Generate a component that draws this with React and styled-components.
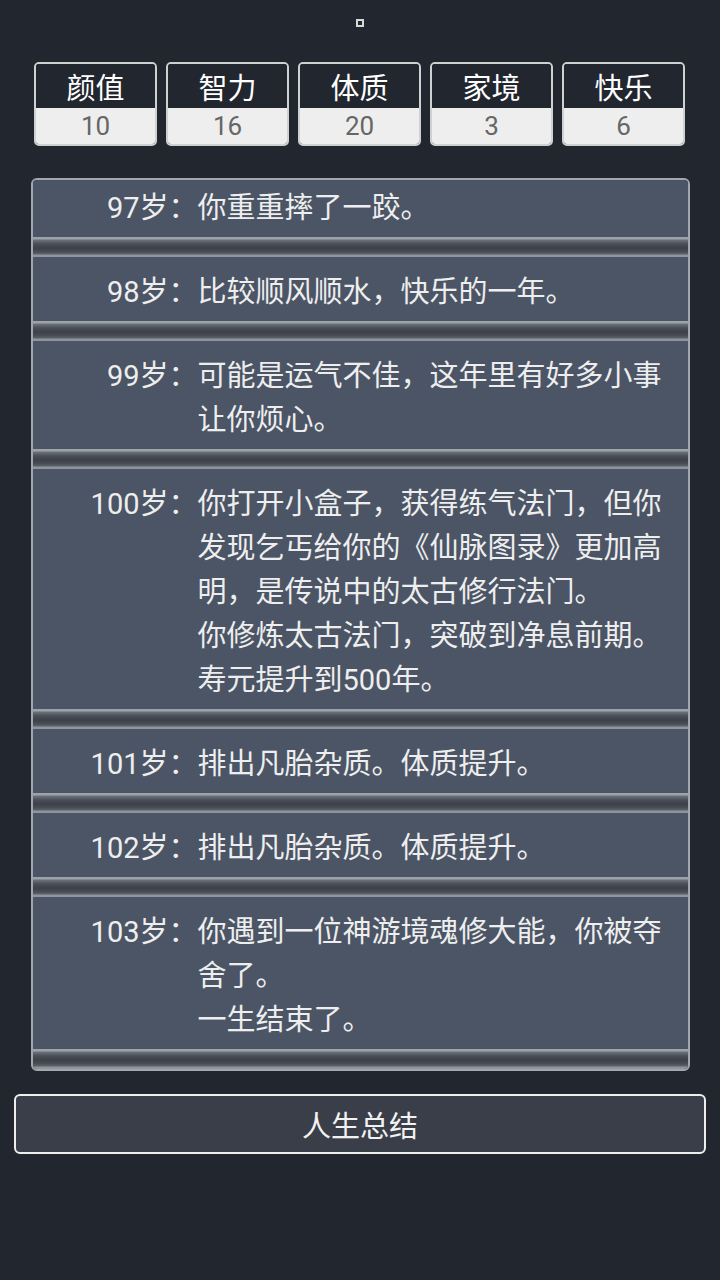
import React, { useEffect, useRef } from 'react';
import styled, { createGlobalStyle } from 'styled-components';

const GlobalStyle = createGlobalStyle`
    html, body {
        margin: 0;
        padding: 0;
        background-color: #21262f;
    }
    body {
        font-family: Roboto, "Noto Sans CJK SC", sans-serif;
        color: #eeeeee;
    }
`;

const Page = styled.div`
    width: 720px;
    height: 1280px;
    display: flex;
    flex-direction: column;
    align-items: center;
    box-sizing: border-box;
    padding-top: 19px;
`;

const Marker = styled.span`
    width: 4px;
    height: 4px;
    border: 2px solid #d8d8d8;
    margin-bottom: 35px;
`;

const StatRow = styled.div`
    display: flex;
    gap: 9px;
    width: 651px;
    margin-bottom: 32px;
    margin-right: 1px;
`;

const StatBox = styled.div`
    width: 123px;
    height: 84px;
    box-sizing: border-box;
    border: 2px solid #cfd0d2;
    border-radius: 5px;
    overflow: hidden;
    display: flex;
    flex-direction: column;
`;

const StatLabel = styled.div`
    height: 44px;
    box-sizing: border-box;
    padding-top: 2px;
    background-color: #21262f;
    color: #ffffff;
    font-size: 29px;
    line-height: 46px;
    text-align: center;
`;

const StatValue = styled.div`
    flex: 1;
    background-color: #eeeeee;
    color: #666666;
    font-size: 26px;
    line-height: 36px;
    text-align: center;
`;

const Panel = styled.div`
    width: 659px;
    height: 893px;
    box-sizing: border-box;
    border: 2px solid #a3a6ac;
    border-radius: 6px;
    background-color: #3b3f48;
    overflow-y: auto;
    scrollbar-width: none;
    &::-webkit-scrollbar { display: none; }
`;

const Entry = styled.div`
    display: flex;
    background-color: #4b5565;
    padding: 13px 0 7px;
    font-size: 29px;
    line-height: 44px;
    color: #eeeeee;
`;

const Age = styled.div`
    width: 165px;
    flex-shrink: 0;
    text-align: right;
    white-space: nowrap;
`;

const Story = styled.div`
    width: 482px;
`;

const Groove = styled.div`
    height: 20px;
    background: linear-gradient(
        to bottom,
        #9ca2aa 0px,
        #9ca2aa 2px,
        #6c717a 3px,
        #4a4e56 7px,
        #3d4149 11px,
        #454951 14px,
        #5c616a 17px,
        #8f959d 18px,
        #8f959d 20px
    );
`;

const SummaryButton = styled.button`
    margin-top: 23px;
    width: 692px;
    height: 60px;
    box-sizing: border-box;
    border: 2px solid #eeeeee;
    border-radius: 6px;
    background-color: #3a3e48;
    color: #f2f2f2;
    font-family: Roboto, "Noto Sans CJK SC", sans-serif;
    font-size: 29px;
    padding: 0;
`;

const stats = [
    { label: '颜值', value: 10 },
    { label: '智力', value: 16 },
    { label: '体质', value: 20 },
    { label: '家境', value: 3 },
    { label: '快乐', value: 6 },
];

const events = [
    { age: 97, lines: ['你重重摔了一跤。'] },
    { age: 98, lines: ['比较顺风顺水，快乐的一年。'] },
    { age: 99, lines: ['可能是运气不佳，这年里有好多小事让你烦心。'] },
    { age: 100, lines: ['你打开小盒子，获得练气法门，但你发现乞丐给你的《仙脉图录》更加高明，是传说中的太古修行法门。', '你修炼太古法门，突破到净息前期。', '寿元提升到500年。'] },
    { age: 101, lines: ['排出凡胎杂质。体质提升。'] },
    { age: 102, lines: ['排出凡胎杂质。体质提升。'] },
    { age: 103, lines: ['你遇到一位神游境魂修大能，你被夺舍了。', '一生结束了。'] },
];

export default function App() {
    const panelRef = useRef(null);

    // the log always sits scrolled to its newest entry
    useEffect(() => {
        if (panelRef.current) {
            panelRef.current.scrollTop = panelRef.current.scrollHeight;
        }
    }, []);

    return (
        <>
            <GlobalStyle />
            <Page>
                <Marker />
                <StatRow>
                    {stats.map(s => (
                        <StatBox key={s.label}>
                            <StatLabel>{s.label}</StatLabel>
                            <StatValue>{s.value}</StatValue>
                        </StatBox>
                    ))}
                </StatRow>

                <Panel ref={panelRef}>
                    {events.map(e => (
                        <React.Fragment key={e.age}>
                            <Entry>
                                <Age>{e.age}岁：</Age>
                                <Story>
                                    {e.lines.map((line, i) => <div key={i}>{line}</div>)}
                                </Story>
                            </Entry>
                            <Groove />
                        </React.Fragment>
                    ))}
                </Panel>

                <SummaryButton>人生总结</SummaryButton>
            </Page>
        </>
    );
}
